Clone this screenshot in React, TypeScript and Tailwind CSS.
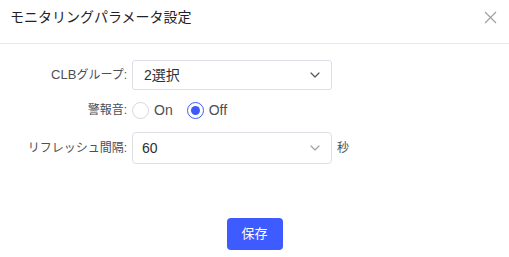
import React from "react";

const font = { fontFamily: '"Liberation Sans", "Noto Sans CJK JP", sans-serif' };

function Chevron({ color }: { color: string }) {
  return (
    <svg width="10" height="6" viewBox="0 0 10 6" fill="none">
      <path d="M1 1l4 4 4-4" stroke={color} strokeWidth="1.2" strokeLinecap="round" strokeLinejoin="round" />
    </svg>
  );
}

export default function App() {
  return (
    <div className="w-[509px] h-[257px] bg-white relative" style={font}>
      <div className="h-[44px] border-b border-[#e8e8ec] flex items-start justify-between pl-[10px] pr-[12px] pt-[6px]">
        <div className="text-[14px] leading-[22px] text-[#1f2329]">モニタリングパラメータ設定</div>
        <svg className="mt-[5px]" width="13" height="13" viewBox="0 0 13 13">
          <path d="M1 1l11 11M12 1L1 12" stroke="#9a9da3" strokeWidth="1.1" />
        </svg>
      </div>

      <div className="pt-[16px]">
        <div className="flex items-center h-[30px]">
          <div className="w-[127px] text-right text-[12px] text-[#4b4f56]">
            <span className="text-[13px]">CLB</span>グループ:
          </div>
          <div className="ml-[5px] w-[200px] h-[30px] border border-[#dcdfe6] rounded-[3px] flex items-center justify-between pl-[11px] pr-[11px]">
            <span className="text-[14px] text-[#2b2f36]">2選択</span>
            <Chevron color="#505560" />
          </div>
        </div>

        <div className="flex items-center h-[20px] mt-[10px]">
          <div className="w-[127px] text-right text-[12px] text-[#4b4f56]">警報音:</div>
          <div className="ml-[5px] flex items-center">
            <span className="w-[17px] h-[17px] rounded-full border border-[#d4d7de] bg-white"></span>
            <span className="ml-[5px] text-[14px] text-[#4b4f56]">On</span>
            <span className="ml-[14px] w-[17px] h-[17px] rounded-full border-[1.5px] border-[#3e5bf6] flex items-center justify-center">
              <span className="w-[9px] h-[9px] rounded-full bg-[#3e5bf6]"></span>
            </span>
            <span className="ml-[5px] text-[14px] text-[#4b4f56]">Off</span>
          </div>
        </div>

        <div className="flex items-center h-[32px] mt-[12px]">
          <div className="w-[127px] text-right text-[12px] text-[#4b4f56]">リフレッシュ間隔:</div>
          <div className="ml-[5px] w-[200px] h-[32px] border border-[#dcdfe6] rounded-[4px] flex items-center justify-between pl-[9px] pr-[11px]">
            <span className="text-[14px] text-[#2b2f36]">60</span>
            <Chevron color="#9ea2aa" />
          </div>
          <span className="ml-[5px] text-[12px] text-[#4b4f56]">秒</span>
        </div>
      </div>

      <div className="flex justify-center mt-[54px]">
        <button className="w-[56px] h-[32px] rounded-[4px] bg-[#3e5bff] text-white text-[13px] flex items-center justify-center">保存</button>
      </div>
    </div>
  );
}
